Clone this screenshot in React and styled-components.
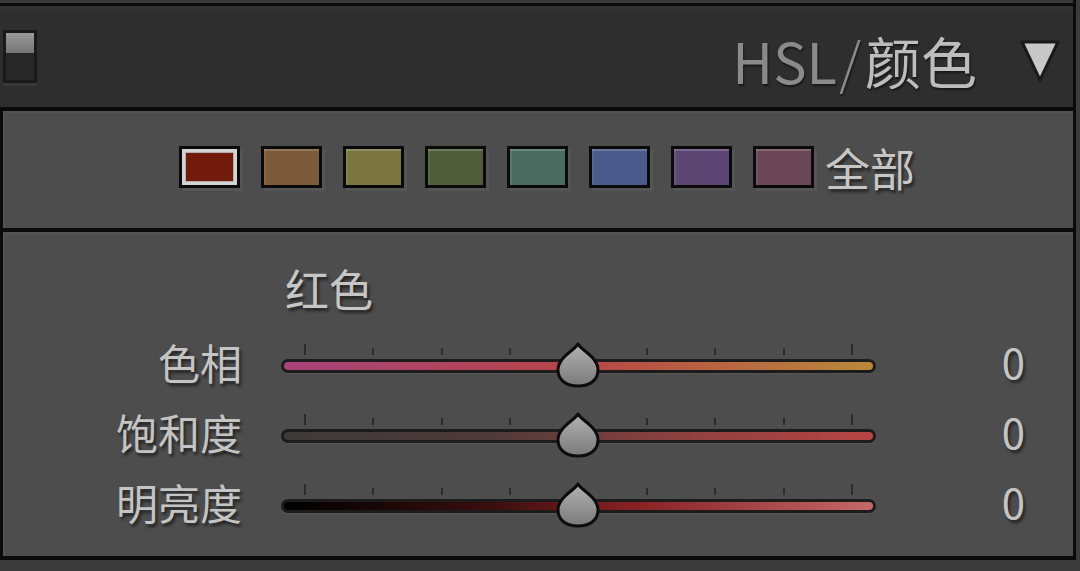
import React from 'react';
import styled, { createGlobalStyle } from 'styled-components';

const GlobalStyle = createGlobalStyle`
  html, body {
    margin: 0;
    padding: 0;
    background: #3b3b3b;
  }
  body {
    font-family: "Noto Sans CJK SC", "Noto Sans", sans-serif;
  }
`;

const Page = styled.div`
  width: 1080px;
  height: 571px;
  overflow: hidden;
  background: #3b3b3b;
`;

const Frame = styled.div`
  width: 1073px;
  display: flex;
  flex-direction: column;
  background: #0a0a0a;
  border-right: 3px solid #0a0a0a;
`;

const TopStub = styled.div`
  height: 3px;
  background: #3a3a3a;
  border-bottom: 3px solid #0a0a0a;
`;

const Header = styled.div`
  height: 101px;
  display: flex;
  align-items: center;
  background: linear-gradient(#333333, #2e2e2e 8%, #2e2e2e);
  border-bottom: 4px solid #0a0a0a;
`;

const Switch = styled.div`
  margin-left: 3px;
  width: 28px;
  height: 47px;
  border: 3px solid #1a1a1a;
  display: flex;
  flex-direction: column;
  box-shadow: 0 3px 0 #383838;
`;

const SwitchKnob = styled.div`
  height: 20px;
  background: linear-gradient(#9a9a9a, #767676);
`;

const SwitchTrack = styled.div`
  flex: 1;
  background: #272727;
`;

const Title = styled.div`
  margin-left: auto;
  margin-right: 42px;
  padding-top: 6px;
  font-size: 56px;
  line-height: 1;
  text-shadow: 1px 2px 2px rgba(0, 0, 0, 0.5);
`;

const TitlePart = styled.span`
  color: ${({ active }) => (active ? '#bdbdbd' : '#8a8a8a')};
`;

const Slash = styled.span`
  display: inline-block;
  margin: 0 4px 0 2px;
  font-weight: 300;
  color: #8a8a8a;
`;

const Caret = styled.svg`
  width: 42px;
  height: 44px;
  margin-right: 12px;
  margin-top: 8px;
`;

const Panel = styled.div`
  margin-left: 3px;
  background: #4d4d4d;
  box-shadow: inset 2px 2px 0 #535353;
  border-bottom: 4px solid #0a0a0a;
  box-sizing: border-box;
`;

const SwatchPanel = styled(Panel)`
  height: 121px;
  display: flex;
  align-items: center;
  padding-left: 176px;
  gap: 21px;
  padding-bottom: 5px;
`;

const Swatch = styled.div`
  width: 55px;
  height: 36px;
  border: 3px solid #0a0a0a;
  box-sizing: content-box;
  background: ${({ color }) => color};
  box-shadow: ${({ selected }) => (selected
    ? 'inset 0 0 0 3px #d4d4d4, inset 0 0 0 4px #b0b0b0, 3px 3px 0 #555555'
    : 'inset 0 2px 0 rgba(255,255,255,0.18), inset 2px 0 0 rgba(255,255,255,0.08), 3px 3px 0 #555555')};
`;

const AllLabel = styled.div`
  margin-left: -10px;
  font-size: 45px;
  line-height: 1;
  color: #c6c6c6;
  text-shadow: 2px 3px 3px rgba(0, 0, 0, 0.55);
`;

const SliderPanel = styled(Panel)`
  height: 328px;
  padding-top: 34px;
`;

const GroupTitle = styled.div`
  margin-left: 282px;
  height: 64px;
  font-size: 44px;
  line-height: 1;
  color: #c6c6c6;
  text-shadow: 2px 3px 3px rgba(0, 0, 0, 0.55);
`;

const Row = styled.div`
  height: 70px;
  display: flex;
  align-items: center;
`;

const Label = styled.div`
  width: 239px;
  text-align: right;
  font-size: 42px;
  line-height: 1;
  color: #c4c4c4;
  text-shadow: 2px 3px 3px rgba(0, 0, 0, 0.55);
  margin-top: -6px;
`;

const Slider = styled.div`
  position: relative;
  margin-left: 39px;
  width: 595px;
  height: 14px;
  margin-top: 2px;
`;

const Track = styled.div`
  height: 100%;
  box-sizing: border-box;
  border: 3px solid #1c1c1c;
  border-radius: 7px;
  background: ${({ gradient }) => gradient};
  box-shadow: 0 1px 1px rgba(255, 255, 255, 0.06);
`;

const Tick = styled.div`
  position: absolute;
  width: 2px;
  bottom: 18px;
  height: ${({ long }) => (long ? '11px' : '7px')};
  background: #2c2c2c;
`;

const Thumb = styled.svg`
  position: absolute;
  left: 50%;
  top: -17px;
  width: 44px;
  height: 46px;
  margin-left: -23px;
`;

const Value = styled.div`
  flex: 1;
  text-align: right;
  padding-right: 48px;
  font-size: 42px;
  line-height: 1;
  color: #c4c4c4;
  text-shadow: 2px 3px 3px rgba(0, 0, 0, 0.55);
  margin-top: -9px;
`;

const swatches = [
  { color: '#721a0c', selected: true },
  { color: '#7c5a3a' },
  { color: '#7b7541' },
  { color: '#4f5d3a' },
  { color: '#4a6b5f' },
  { color: '#4a5a8a' },
  { color: '#5e4674' },
  { color: '#6a4656' },
];

const sliders = [
  { label: '色相', gradient: 'linear-gradient(90deg, #a8437a, #b84548 50%, #b9883a)' },
  { label: '饱和度', gradient: 'linear-gradient(90deg, #3d3a3a, #4f3a3a 35%, #8a4040 65%, #b84444)' },
  { label: '明亮度', gradient: 'linear-gradient(90deg, #000000, #3a0e0e 35%, #8a2222 60%, #c46868)' },
];

const tickPositions = Array.from({ length: 9 }, (_, i) => 23 + i * 68.4);

function ThumbShape() {
  return (
    <Thumb viewBox="0 0 44 46">
      <defs>
        <linearGradient id="thumbFill" x1="0" y1="0" x2="0" y2="1">
          <stop offset="0" stopColor="#b2b2b2" />
          <stop offset="1" stopColor="#7a7a7a" />
        </linearGradient>
      </defs>
      <path
        d="M22 2 C25 8 42 15 42 28 C42 38 34 44 22 44 C10 44 2 38 2 28 C2 15 19 8 22 2 Z"
        fill="url(#thumbFill)"
        stroke="#0c0c0c"
        strokeWidth="3"
        strokeLinejoin="round"
      />
    </Thumb>
  );
}

export default function App() {
  return (
    <Page>
      <GlobalStyle />
      <Frame>
        <TopStub />
        <Header>
          <Switch>
            <SwitchKnob />
            <SwitchTrack />
          </Switch>
          <Title>
            <TitlePart>HSL</TitlePart>
            <Slash>/</Slash>
            <TitlePart active>颜色</TitlePart>
          </Title>
          <Caret viewBox="0 0 42 44">
            <polygon points="3,3 39,3 21,41" fill="#c8c8c8" stroke="#1a1a1a" strokeWidth="3" strokeLinejoin="round" />
          </Caret>
        </Header>
        <SwatchPanel>
          {swatches.map((s) => (
            <Swatch key={s.color} color={s.color} selected={s.selected} />
          ))}
          <AllLabel>全部</AllLabel>
        </SwatchPanel>
        <SliderPanel>
          <GroupTitle>红色</GroupTitle>
          {sliders.map((s) => (
            <Row key={s.label}>
              <Label>{s.label}</Label>
              <Slider>
                {tickPositions.map((x, i) => (
                  <Tick key={x} long={i === 0 || i === 8} style={{ left: x }} />
                ))}
                <Track gradient={s.gradient} />
                <ThumbShape />
              </Slider>
              <Value>0</Value>
            </Row>
          ))}
        </SliderPanel>
      </Frame>
    </Page>
  );
}
